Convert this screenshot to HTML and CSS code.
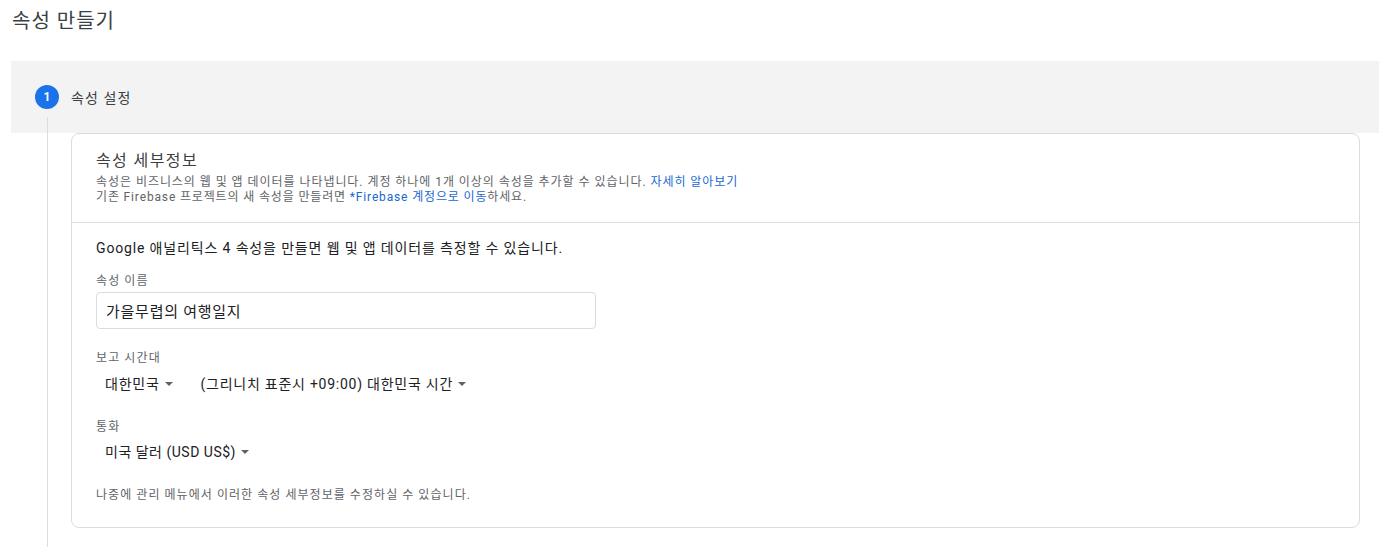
FILE: index.html
```html
<!DOCTYPE html>
<html lang="ko">
<head>
<meta charset="utf-8">
<title>속성 만들기</title>
<link rel="stylesheet" href="styles.css">
</head>
<body>
<div class="page">
  <h1 class="page-title">속성 만들기</h1>
  <div class="step">
    <div class="step-head">
      <span class="step-num">1</span>
      <span class="step-label">속성 설정</span>
    </div>
    <div class="step-body">
      <div class="card">
        <div class="card-head">
          <div class="card-title">속성 세부정보</div>
          <div class="card-sub card-sub-wide">속성은 비즈니스의 웹 및 앱 데이터를 나타냅니다. 계정 하나에 1개 이상의 속성을 추가할 수 있습니다. <a class="link">자세히 알아보기</a></div>
          <div class="card-sub">기존 Firebase 프로젝트의 새 속성을 만들려면 <a class="link">*Firebase 계정으로 이동</a>하세요.</div>
        </div>
        <div class="card-body">
          <div class="intro">Google 애널리틱스 4 속성을 만들면 웹 및 앱 데이터를 측정할 수 있습니다.</div>
          <div class="label label-first">속성 이름</div>
          <div class="input">가을무렵의 여행일지</div>
          <div class="label label-tz">보고 시간대</div>
          <div class="select-row">
            <span class="select">대한민국<svg class="caret" viewBox="0 0 10 5"><path d="M0 0l5 5 5-5z"/></svg></span>
            <span class="select select-tz">(그리니치 표준시 +09:00) 대한민국 시간<svg class="caret" viewBox="0 0 10 5"><path d="M0 0l5 5 5-5z"/></svg></span>
          </div>
          <div class="label label-cur">통화</div>
          <div class="select-row select-row-cur">
            <span class="select">미국 달러 (USD US$)<svg class="caret" viewBox="0 0 10 5"><path d="M0 0l5 5 5-5z"/></svg></span>
          </div>
          <div class="note">나중에 관리 메뉴에서 이러한 속성 세부정보를 수정하실 수 있습니다.</div>
        </div>
      </div>
    </div>
  </div>
</div>
</body>
</html>
```

FILE: styles.css
```css
* { box-sizing: border-box; }
html, body { margin: 0; padding: 0; background: #fff; }
body {
  font-family: Roboto, "Noto Sans CJK KR", sans-serif;
  color: #3c4043;
  height: 547px;
  overflow: hidden;
}
.page-title {
  margin: 0;
  padding: 8px 0 0 12px;
  height: 61px;
  font-size: 20px;
  font-weight: 400;
  line-height: 26px;
  letter-spacing: 1px;
  color: #3c4043;
}
.step {
  margin-left: 11px;
  position: relative;
}
.step::before {
  content: "";
  position: absolute;
  left: 36px;
  top: 56px;
  height: 430px;
  width: 1px;
  background: #dadce0;
}
.step-head {
  height: 72px;
  background: #f3f3f3;
  display: flex;
  align-items: center;
  padding-left: 24px;
  gap: 12px;
}
.step-num {
  width: 24px;
  height: 24px;
  border-radius: 50%;
  background: #1a73e8;
  color: #fff;
  font-size: 12px;
  font-weight: 700;
  display: flex;
  align-items: center;
  justify-content: center;
}
.step-label {
  font-size: 14px;
  letter-spacing: 1.1px;
  color: #3c4043;
}
.step-body {
  padding-left: 60px;
  padding-right: 19px;
}
.card {
  border: 1px solid #dadce0;
  border-radius: 8px;
  background: #fff;
}
.card-head {
  padding: 17px 24px 17px;
  border-bottom: 1px solid #e0e0e0;
}
.card-title {
  font-size: 16px;
  line-height: 20px;
  letter-spacing: 1.4px;
  color: #3c4043;
  margin-bottom: 4px;
}
.card-sub {
  font-size: 12px;
  line-height: 15px;
  letter-spacing: 0.85px;
  color: #5f6368;
}
.card-sub-wide { letter-spacing: 0.95px; }
.link { color: #1967d2; text-decoration: none; }
.card-body {
  padding: 15px 24px 25px;
}
.intro {
  font-size: 14px;
  line-height: 20px;
  letter-spacing: 0.85px;
  color: #202124;
}
.label {
  font-size: 12px;
  line-height: 14px;
  letter-spacing: 1.1px;
  color: #5f6368;
}
.label-first { margin-top: 16px; }
.input {
  margin-top: 4px;
  width: 500px;
  height: 37px;
  border: 1px solid #dadce0;
  border-radius: 4px;
  padding: 0 9px;
  display: flex;
  align-items: center;
  font-size: 15px;
  letter-spacing: 0.75px;
  color: #202124;
}
.label-tz { margin-top: 22px; }
.select-row {
  margin-top: 9px;
  display: flex;
  gap: 28px;
  padding-left: 9px;
}
.select {
  font-size: 14px;
  line-height: 20px;
  letter-spacing: 0.75px;
  color: #202124;
  display: inline-flex;
  align-items: center;
}
.caret {
  width: 8px;
  height: 4px;
  margin-left: 5px;
  fill: #5f6368;
}
.label-cur { margin-top: 26px; }
.select-row-cur { margin-top: 8px; }
.select-row-cur .select { letter-spacing: 0.5px; }
.note {
  margin-top: 26px;
  font-size: 12px;
  line-height: 14px;
  letter-spacing: 1.05px;
  color: #5f6368;
}
```
